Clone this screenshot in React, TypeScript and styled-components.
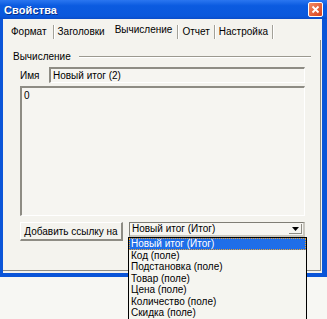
import React from 'react'
import styled, { createGlobalStyle } from 'styled-components'

const Global = createGlobalStyle`
  html, body {
    margin: 0;
    padding: 0;
    background: #f7f7f3;
    font-family: "Liberation Sans", Arial, sans-serif;
    font-size: 10px;
    color: #000;
  }
`

const Page = styled.div`
  width: 327px;
  height: 319px;
  position: relative;
`

const Window = styled.div`
  width: 327px;
  height: 277px;
  display: flex;
  flex-direction: column;
  background: #0b55d8;
`

const TitleBar = styled.div`
  height: 19px;
  display: flex;
  align-items: center;
  justify-content: space-between;
  padding: 0 4px 0 4px;
  background: linear-gradient(#2a76f0, #0b5be0 30%, #0a58dc 85%, #0a4cc8);
  flex-shrink: 0;
`

const Title = styled.span`
  color: #fff;
  font-weight: bold;
  font-size: 11px;
  letter-spacing: 0.1px;
  text-shadow: 1px 1px 0 #0a2f88;
`

const CloseBtn = styled.div`
  width: 13px;
  height: 13px;
  border: 1px solid #fff;
  border-radius: 2px;
  background: linear-gradient(135deg, #f08a64, #d8401c);
  display: flex;
  align-items: center;
  justify-content: center;
`

const Client = styled.div`
  flex: 1;
  margin: 0 5px 4px 3px;
  background: #f4f3ee;
  display: flex;
  flex-direction: column;
`

const Tabs = styled.div`
  height: 21px;
  display: flex;
  align-items: flex-end;
  padding-left: 8px;
  flex-shrink: 0;
`

const TabLabel = styled.span<{ $active?: boolean; $pr: number }>`
  line-height: 12px;
  margin-bottom: ${p => (p.$active ? 4 : 2)}px;
  padding-right: ${p => p.$pr}px;
  color: #000;
`

const Sep = styled.span`
  width: 1px;
  height: 14px;
  margin: 0 3px 1px 0;
  background: #a3a198;
  border-right: 1px solid #fff;
`

const Panel = styled.div`
  flex: 1;
  display: flex;
  flex-direction: column;
  padding: 11px 9px 0 10px;
  border-right: 1px solid #8e8c84;
  border-bottom: 1px solid #8e8c84;
  margin-right: 1px;
  margin-bottom: 2px;
`

const Legend = styled.div`
  height: 12px;
  display: flex;
  align-items: center;
  gap: 8px;
  line-height: 12px;
  &::after {
    content: '';
    flex: 1;
    height: 1px;
    background: #9b998f;
    border-bottom: 1px solid #fff;
  }
`

const Row = styled.div<{ $top: number }>`
  display: flex;
  align-items: center;
  margin: ${p => p.$top}px 6px 0 7px;
`

const Label = styled.span`
  width: 29px;
  flex-shrink: 0;
`

const Sunken = styled.div<{ $h: number }>`
  flex: 1;
  height: ${p => p.$h}px;
  box-sizing: border-box;
  border-top: 2px solid #8e8c84;
  border-left: 2px solid #8e8c84;
  border-right: 1px solid #fff;
  border-bottom: 1px solid #fff;
  padding: 0 2px;
  line-height: 13px;
  background: #f6f5f1;
`

const TextArea = styled(Sunken)`
  padding: 1px 2px;
`

const Button = styled.div`
  width: 103px;
  height: 19px;
  box-sizing: border-box;
  flex-shrink: 0;
  display: flex;
  align-items: center;
  justify-content: center;
  border-top: 1px solid #fff;
  border-left: 1px solid #fff;
  border-right: 2px solid #8e8c84;
  border-bottom: 2px solid #8e8c84;
  background: #f4f3ee;
  align-self: flex-start;
`

const Combo = styled.div`
  position: relative;
  flex: 1;
  height: 15px;
  margin-left: 6px;
  align-self: flex-start;
  box-sizing: border-box;
  border-top: 1px solid #7f7d75;
  border-left: 1px solid #7f7d75;
  border-right: 2px solid #c9c7bf;
  border-bottom: 2px solid #c9c7bf;
  display: flex;
  align-items: center;
  padding-left: 2px;
  background: #f6f5f1;
`

const ComboText = styled.span`
  flex: 1;
  line-height: 12px;
`

const Arrow = styled.div`
  width: 13px;
  height: 10px;
  margin-right: 1px;
  box-sizing: border-box;
  border-right: 1px solid #8e8c84;
  border-bottom: 1px solid #8e8c84;
  display: flex;
  align-items: center;
  justify-content: center;
`

const List = styled.div`
  position: absolute;
  top: 237px;
  left: 128px;
  width: 179px;
  box-sizing: border-box;
  border: 1px solid #000;
  background: #f5f5f0;
  z-index: 5;
`

const Item = styled.div<{ $sel?: boolean }>`
  height: 11.5px;
  line-height: 11.5px;
  padding-left: 2px;
  white-space: nowrap;
  background: ${p => (p.$sel ? '#1f6ee8' : 'transparent')};
  color: ${p => (p.$sel ? '#fff' : '#000')};
  outline: ${p => (p.$sel ? '1px dotted #e8a030' : 'none')};
  outline-offset: -1px;
`

const items = [
  'Новый итог (Итог)',
  'Код (поле)',
  'Подстановка (поле)',
  'Товар (поле)',
  'Цена (поле)',
  'Количество (поле)',
  'Скидка (поле)',
]

export default function App() {
  return (
    <Page>
      <Global />
      <Window>
        <TitleBar>
          <Title>Свойства</Title>
          <CloseBtn>
            <svg width="9" height="9" viewBox="0 0 9 9">
              <path d="M1.5 1.5 L7.5 7.5 M7.5 1.5 L1.5 7.5" stroke="#fff" strokeWidth="1.8" />
            </svg>
          </CloseBtn>
        </TitleBar>
        <Client>
          <Tabs>
            <TabLabel $pr={6}>Формат</TabLabel>
            <Sep />
            <TabLabel $pr={10}>Заголовки</TabLabel>
            <TabLabel $active $pr={5}>Вычисление</TabLabel>
            <Sep />
            <TabLabel $pr={4}>Отчет</TabLabel>
            <Sep />
            <TabLabel $pr={4}>Настройка</TabLabel>
            <Sep />
          </Tabs>
          <Panel>
            <Legend>Вычисление</Legend>
            <Row $top={4}>
              <Label>Имя</Label>
              <Sunken $h={16}>Новый итог (2)</Sunken>
            </Row>
            <Row $top={3}>
              <TextArea $h={130}>0</TextArea>
            </Row>
            <Row $top={6}>
              <Button>Добавить ссылку на</Button>
              <Combo>
                <ComboText>Новый итог (Итог)</ComboText>
                <Arrow>
                  <svg width="7" height="4" viewBox="0 0 7 4">
                    <path d="M0 0 H7 L3.5 4 Z" fill="#000" />
                  </svg>
                </Arrow>
              </Combo>
            </Row>
          </Panel>
        </Client>
      </Window>
      <List>
        {items.map((t, i) => (
          <Item key={t} $sel={i === 0}>{t}</Item>
        ))}
      </List>
    </Page>
  )
}
